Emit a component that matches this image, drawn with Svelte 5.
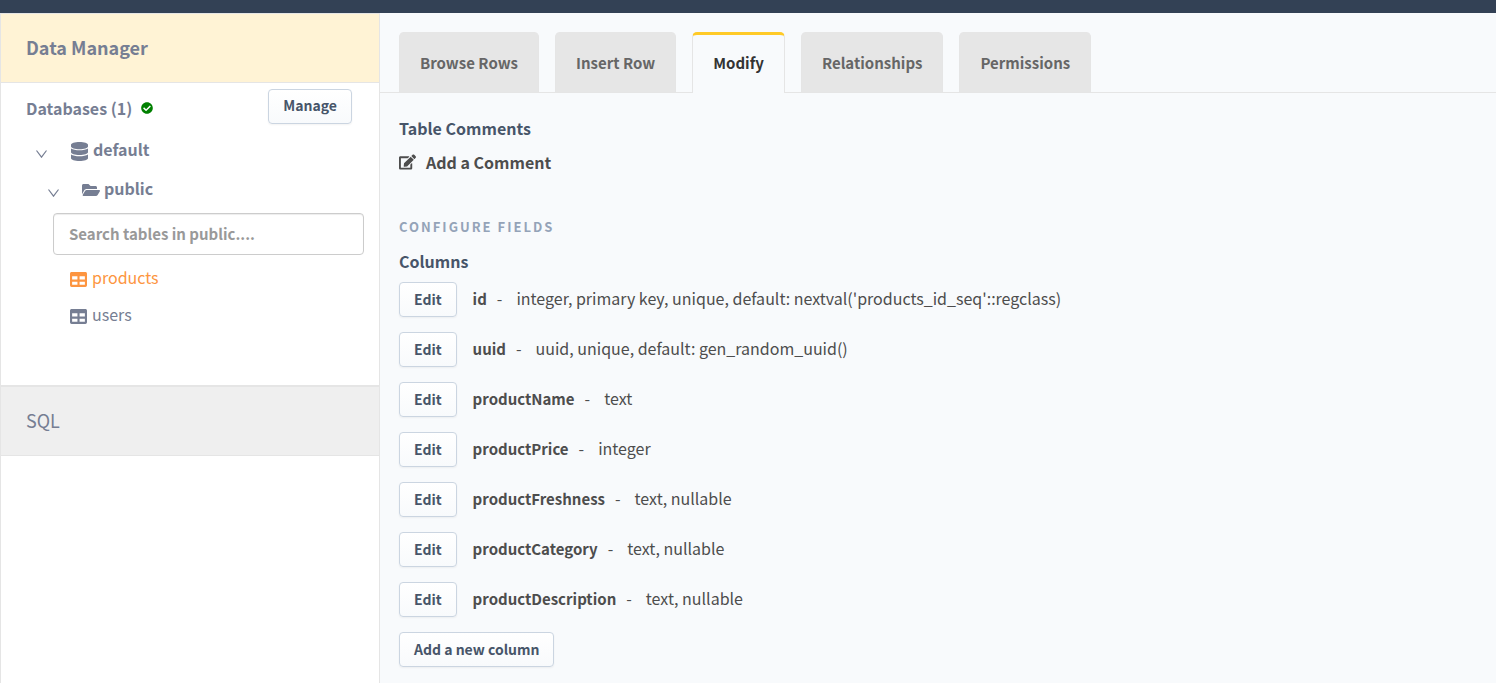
<script>
  const tabs = ['Browse Rows', 'Insert Row', 'Modify', 'Relationships', 'Permissions'];
  let active = $state('Modify');

  const columns = [
    { name: 'id', info: "integer, primary key, unique, default: nextval('products_id_seq'::regclass)" },
    { name: 'uuid', info: 'uuid, unique, default: gen_random_uuid()' },
    { name: 'productName', info: 'text' },
    { name: 'productPrice', info: 'integer' },
    { name: 'productFreshness', info: 'text, nullable' },
    { name: 'productCategory', info: 'text, nullable' },
    { name: 'productDescription', info: 'text, nullable' }
  ];

  const tables = ['products', 'users'];
  let current = $state('products');
</script>

{#snippet chevron()}
  <svg class="chevron" viewBox="0 0 11 8" width="11" height="8" aria-hidden="true">
    <path d="M0.5 0.5L5.5 7.2L10.5 0.5" fill="none" stroke="currentColor" stroke-width="1.2" />
  </svg>
{/snippet}

<div class="page">
  <div class="topbar"></div>
  <div class="body">
    <aside class="sidebar">
      <a class="section data" href="#data">Data Manager</a>
      <div class="tree">
        <div class="databases">
          <span>Databases (1)</span>
          <svg viewBox="0 0 512 512" width="12" height="12" fill="#008000" aria-hidden="true">
            <path d="M504 256c0 136.967-111.033 248-248 248S8 392.967 8 256 119.033 8 256 8s248 111.033 248 248zM227.314 387.314l184-184c6.248-6.248 6.248-16.379 0-22.627l-22.627-22.627c-6.248-6.249-16.379-6.249-22.628 0L216 308.118l-70.059-70.059c-6.248-6.248-16.379-6.248-22.628 0l-22.627 22.627c-6.248 6.248-6.248 16.379 0 22.627l104 104c6.249 6.249 16.379 6.249 22.628.001z" />
          </svg>
          <button class="btn manage">Manage</button>
        </div>
        <div class="node source">
          {@render chevron()}
          <svg class="icon" viewBox="0 0 448 512" width="17" height="19" preserveAspectRatio="none" fill="currentColor" aria-hidden="true">
            <path d="M448 73.143v45.714C448 159.143 347.667 192 224 192S0 159.143 0 118.857V73.143C0 32.857 100.333 0 224 0s224 32.857 224 73.143zM448 176v102.857C448 319.143 347.667 352 224 352S0 319.143 0 278.857V176c48.125 33.143 136.208 48.572 224 48.572S399.874 209.143 448 176zm0 160v102.857C448 479.143 347.667 512 224 512S0 479.143 0 438.857V336c48.125 33.143 136.208 48.572 224 48.572S399.874 369.143 448 336z" />
          </svg>
          <a href="#default">default</a>
        </div>
        <div class="node schema">
          {@render chevron()}
          <svg class="icon" viewBox="0 0 576 512" width="18" height="16" fill="currentColor" aria-hidden="true">
            <path d="M572.694 292.093L500.27 416.248A63.997 63.997 0 0 1 444.989 448H45.025c-18.523 0-30.064-20.093-20.731-36.093l72.424-124.155A64 64 0 0 1 152 256h399.964c18.523 0 30.064 20.093 20.73 36.093zM152 224h328v-48c0-26.51-21.49-48-48-48H272l-64-64H48C21.49 64 0 85.49 0 112v278.046l69.077-118.418C86.214 242.25 117.989 224 152 224z" />
          </svg>
          <a href="#public">public</a>
        </div>
        <input class="search" type="text" aria-label="Search tables" placeholder="Search tables in public...." />
        <ul class="tables">
          {#each tables as table}
            <li>
              <a href={'#' + table} class:current={table === current} onclick={() => (current = table)}>
                <svg class="icon" viewBox="0 32 512 448" width="17" height="15" fill="currentColor" aria-hidden="true">
                  <path d="M464 32H48C21.49 32 0 53.49 0 80v352c0 26.51 21.49 48 48 48h416c26.51 0 48-21.49 48-48V80c0-26.51-21.49-48-48-48zM224 416H64v-96h160v96zm0-160H64v-96h160v96zm224 160H288v-96h160v96zm0-160H288v-96h160v96z" />
                </svg>
                {table}
              </a>
            </li>
          {/each}
        </ul>
      </div>
      <a class="section sql" href="#sql">SQL</a>
    </aside>

    <main>
      <nav class="tabs">
        {#each tabs as tab}
          <a href={'#' + tab} class="tab" class:active={tab === active} onclick={() => (active = tab)}>{tab}</a>
        {/each}
      </nav>
      <div class="content">
        <h4>Table Comments</h4>
        <a class="comment" href="#comment">
          <svg viewBox="0 0 576 512" width="17" height="16" fill="currentColor" aria-hidden="true">
            <path d="M402.6 83.2l90.2 90.2c3.8 3.8 3.8 10 0 13.8L274.4 405.6l-92.8 10.3c-12.4 1.4-22.9-9.1-21.5-21.5l10.3-92.8L388.8 83.2c3.8-3.8 10-3.8 13.8 0zm162-22.9l-48.8-48.8c-15.2-15.2-39.9-15.2-55.2 0l-35.4 35.4c-3.8 3.8-3.8 10 0 13.8l90.2 90.2c3.8 3.8 10 3.8 13.8 0l35.4-35.4c15.2-15.3 15.2-40 0-55.2zM384 346.2V448H64V128h229.8c3.2 0 6.2-1.3 8.5-3.5l40-40c7.6-7.6 2.2-20.5-8.5-20.5H48C21.5 64 0 85.5 0 112v352c0 26.5 21.5 48 48 48h352c26.5 0 48-21.5 48-48V306.2c0-10.7-12.9-16-20.5-8.5l-40 40c-2.2 2.3-3.5 5.3-3.5 8.5z" />
          </svg>
          Add a Comment
        </a>
        <h3>Configure Fields</h3>
        <h4>Columns</h4>
        <div class="columns">
          {#each columns as column}
            <div class="column">
              <button class="btn">Edit</button>
              <b>{column.name}</b>
              <span class="dash">-</span>
              <span>{column.info}</span>
            </div>
          {/each}
          <button class="btn">Add a new column</button>
        </div>
      </div>
    </main>
  </div>
</div>

<style>
  :global(body) {
    margin: 0;
  }
  * {
    box-sizing: border-box;
  }
  .page {
    display: flex;
    flex-direction: column;
    min-height: 100vh;
    background: #f8fafc;
    color: #4d4d4d;
    font: 16px/24px 'Noto Sans CJK SC', 'Noto Sans', sans-serif;
  }
  a {
    color: inherit;
    text-decoration: none;
  }
  svg {
    flex: none;
  }
  .topbar {
    height: 13px;
    background: #334155;
  }
  .body {
    flex: 1;
    display: flex;
  }
  .sidebar {
    flex: 0 0 380px;
    background: #fff;
    border: 1px solid #e5e5e5;
    border-bottom: 0;
    color: #767e93;
  }
  .section {
    display: block;
    padding: 21px 25px 23px;
    border-bottom: 1px solid #e5e5e5;
    font-size: 18px;
  }
  .data {
    background: #fff3d5;
    font-weight: 700;
  }
  .sql {
    background: #efefef;
    border-top: 2px solid #e5e5e5;
  }
  .tree {
    padding: 6px 15px 59px 25px;
    font-weight: 700;
  }
  .databases {
    display: flex;
    align-items: center;
    gap: 9px;
    height: 38px;
    padding-right: 12px;
  }
  .manage {
    margin: 0 0 4px auto;
  }
  .node {
    display: flex;
    align-items: center;
    gap: 5px;
  }
  .icon {
    margin-top: 4px;
  }
  .chevron {
    margin: 10px 19px 0 0;
  }
  .source {
    height: 44px;
    padding-left: 10px;
  }
  .schema {
    height: 34px;
    padding-left: 22px;
    gap: 4px;
  }
  .search {
    display: block;
    width: calc(100% - 27px);
    height: 42px;
    margin: 8px 0 10px 27px;
    padding: 0 15px 2px;
    border: 1px solid #ccc;
    border-radius: 4px;
    box-shadow: inset 0 1px 1px rgba(0, 0, 0, 0.075);
    background: #fff;
    color: #555;
    font: inherit;
    font-size: 15px;
  }
  .search::placeholder {
    color: #999;
    opacity: 1;
  }
  .tables {
    margin: 0;
    padding: 0 0 0 44px;
    list-style: none;
    font-weight: 400;
  }
  .tables li + li {
    margin-top: 13px;
  }
  .tables a {
    display: flex;
    align-items: center;
    gap: 5px;
  }
  .tables .current {
    color: #fd9540;
  }
  main {
    flex: 1;
    min-width: 0;
  }
  .tabs {
    display: flex;
    gap: 16px;
    padding: 19px 19px 0;
    border-bottom: 1px solid #e5e5e5;
  }
  .tab {
    padding: 19px 20px 17px;
    border: 1px solid #e5e5e5;
    border-width: 0 1px;
    border-radius: 5px 5px 0 0;
    background: #e6e6e6;
    color: #666;
    font-size: 15px;
    font-weight: 700;
  }
  .tab.active {
    margin-bottom: -1px;
    padding-top: 16px;
    border-top: 3px solid #ffca27;
    background: #f8fafc;
    color: #333;
  }
  .content {
    padding: 23px 19px 16px;
  }
  h3,
  h4 {
    margin: 0;
    font-size: 16px;
    color: #475569;
  }
  h3 {
    margin: 41px 0 10px;
    font-size: 13px;
    letter-spacing: 2px;
    text-transform: uppercase;
    color: #94a3b8;
  }
  .comment {
    display: flex;
    align-items: center;
    gap: 10px;
    margin-top: 10px;
    font-weight: 700;
  }
  .columns {
    display: flex;
    flex-direction: column;
    align-items: flex-start;
    gap: 15px;
    margin-top: 9px;
  }
  .column {
    display: flex;
    align-items: baseline;
    height: 35px;
  }
  .column b {
    margin-left: 16px;
    font-size: 15px;
  }
  .dash {
    margin: 0 14px 0 10px;
  }
  .btn {
    height: 35px;
    padding: 0 14px 2px;
    border: 1px solid #cbd5e1;
    border-radius: 4px;
    background: linear-gradient(#fff, #f8fafc);
    box-shadow: 0 1px 2px rgba(0, 0, 0, 0.05);
    color: #475569;
    font: inherit;
    font-size: 14px;
    font-weight: 700;
    line-height: 20px;
    cursor: pointer;
  }
</style>
